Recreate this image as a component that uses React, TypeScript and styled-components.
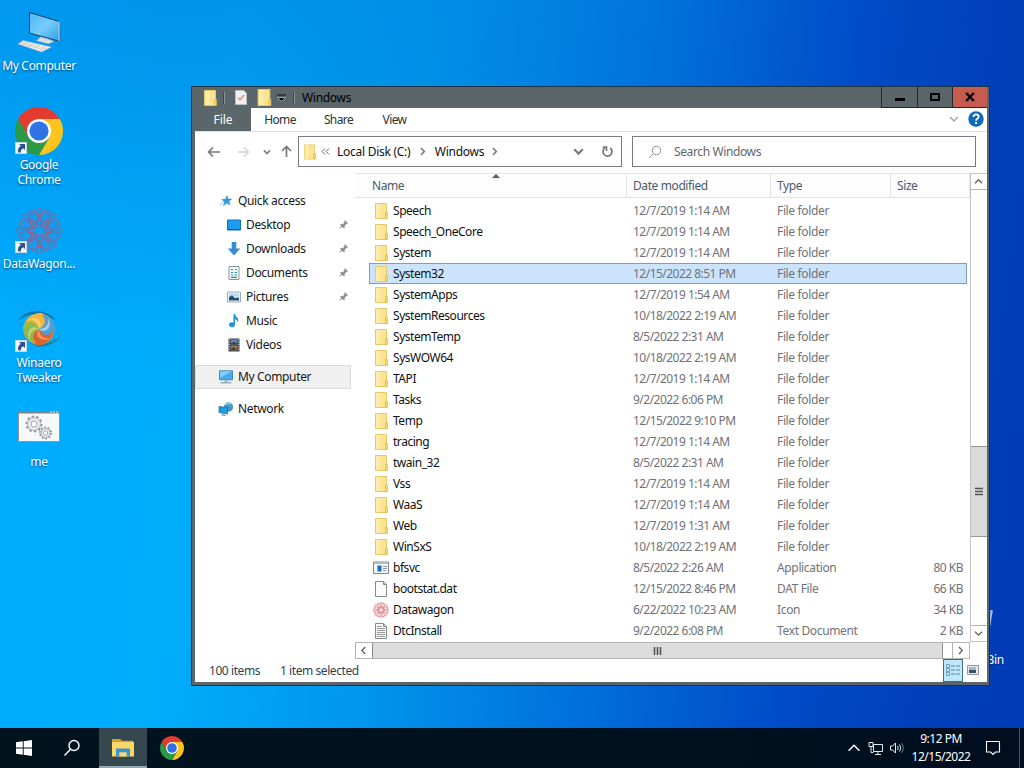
import React from 'react';
import styled, { createGlobalStyle } from 'styled-components';

const GlobalStyle = createGlobalStyle`
  * { box-sizing: border-box; }
  body {
    margin: 0;
    overflow: hidden;
    font-family: 'Noto Sans', 'Open Sans', sans-serif;
    font-size: 12px;
    letter-spacing: -0.35px;
    color: #111;
  }
  svg { display: block; flex: none; }
`;

const Screen = styled.div`
  width: 1024px;
  height: 768px;
  display: flex;
  flex-direction: column;
  overflow: hidden;
`;

const Desktop = styled.main`
  position: relative;
  flex: 1;
  min-height: 0;
  background:
    radial-gradient(ellipse 620px 420px at 190px -60px, rgba(0, 120, 215, 0.55), rgba(0, 120, 215, 0) 100%),
    linear-gradient(97deg, #00acff 0%, #00adfb 22%, #0096ee 40%, #006cda 62%, #004bc8 78%, #003fbb 90%, #003cb6 100%);
`;

const IconColumn = styled.div`
  display: flex;
  flex-direction: column;
  width: 78px;
  padding-top: 8px;
`;

const DesktopItem = styled.div`
  height: 99px;
  width: 78px;
  display: flex;
  flex-direction: column;
  align-items: center;
  gap: 2px;
`;

const DesktopGlyph = styled.div`
  height: 48px;
  display: flex;
  align-items: center;
  justify-content: center;
`;

const DesktopLabel = styled.span`
  color: #fff;
  line-height: 15px;
  text-align: center;
  white-space: pre;
  letter-spacing: -0.3px;
  text-shadow: 0 1px 2px rgba(0, 30, 80, 0.7);
`;

const BinSpot = styled.div`
  position: absolute;
  left: 935px;
  top: 602px;
`;

const Window = styled.section`
  position: absolute;
  left: 191px;
  top: 86px;
  width: 799px;
  height: 600px;
  display: flex;
  flex-direction: column;
  padding: 0 2px 3px 3px;
  border: 1px solid #1c3443;
  background: #5b666a;
`;

const TitleBar = styled.header`
  height: 21px;
  flex: none;
  display: flex;
  align-items: center;
  padding-left: 7px;
`;

const TitleDivider = styled.i<{ $l: number; $r: number }>`
  width: 2px;
  height: 12px;
  margin: 0 ${p => p.$r}px 0 ${p => p.$l}px;
  border-left: 1px solid #3d464a;
  border-right: 1px solid #8b9598;
`;

const TitleText = styled.span`
  color: #000;
  flex: 1;
  letter-spacing: -0.3px;
`;

const CaptionButton = styled.button<{ $close?: boolean; $w?: number }>`
  width: ${p => p.$w ?? 35}px;
  height: 21px;
  padding: 0;
  display: flex;
  align-items: center;
  justify-content: center;
  border: solid #22282b;
  border-width: 0 0 1px 1px;
  background: ${p => (p.$close ? '#c65b50' : 'transparent')};
`;

const Client = styled.div`
  flex: 1;
  min-height: 0;
  display: flex;
  flex-direction: column;
  background: #fff;
`;

const Tabs = styled.nav`
  height: 24px;
  flex: none;
  display: flex;
  border-bottom: 1px solid #dfe2e4;
`;

const Tab = styled.span<{ $active?: boolean; $w: number }>`
  width: ${p => p.$w}px;
  line-height: 23px;
  text-align: center;
  color: ${p => (p.$active ? '#fff' : '#2b3238')};
  background: ${p => (p.$active ? '#5b666a' : 'transparent')};
  letter-spacing: ${p => (p.$active ? -0.1 : -0.6)}px;
`;

const TabTools = styled.div`
  margin-left: auto;
  display: flex;
  align-items: center;
  gap: 9px;
  padding: 0 3px 2px 0;
`;

const AddressRow = styled.div`
  height: 41px;
  flex: none;
  display: flex;
  align-items: center;
  padding: 0 11px 2px 12px;
`;

const NavButtons = styled.div`
  width: 91px;
  display: flex;
  align-items: center;
`;

const Box = styled.div<{ $w: number }>`
  width: ${p => p.$w}px;
  height: 31px;
  display: flex;
  align-items: center;
  border: 1px solid #757b80;
`;

const Crumb = styled.span<{ $w: number }>`
  width: ${p => p.$w}px;
  white-space: nowrap;
  color: #111;
  padding-bottom: 1px;
  letter-spacing: -0.27px;
`;

const AddressBox = styled(Box)`
  padding: 0 7px 0 3px;
  margin-right: 10px;
`;

const SearchBox = styled(Box)`
  padding-left: 15px;
  gap: 12px;
  color: #5f6569;
  letter-spacing: -0.38px;
`;

const Body = styled.div`
  flex: 1;
  min-height: 0;
  display: flex;
`;

const Sidebar = styled.aside`
  width: 160px;
  flex: none;
  padding-top: 16px;
`;

const SideItem = styled.div<{ $level?: number; $selected?: boolean; $gap?: boolean }>`
  display: flex;
  align-items: center;
  width: 156px;
  height: 24px;
  margin-top: ${p => (p.$gap ? 8 : 0)}px;
  padding: 0 2px 1px ${p => (p.$level ? 31 : 23)}px;
  color: #161616;
  background: ${p => (p.$selected ? '#f0f0f0' : 'transparent')};
  box-shadow: ${p => (p.$selected ? 'inset 0 0 0 1px #dcdcdc' : 'none')};
  svg:first-child { margin-right: 4px; }
  svg:last-child { margin-left: auto; }
`;

const Main = styled.div`
  flex: 1;
  min-width: 0;
  display: flex;
  flex-direction: column;
`;

const ListArea = styled.div`
  height: 469px;
  display: flex;
`;

const List = styled.div`
  flex: 1;
  min-width: 0;
  overflow: hidden;
`;

const HeaderRow = styled.div`
  height: 25px;
  display: flex;
  background: #fdfdfd;
  border-top: 1px solid #e3e5e7;
  border-bottom: 1px solid #dfe3e6;
  margin-bottom: 2px;
`;

const HeaderCell = styled.div<{ $w: number; $pad?: number }>`
  position: relative;
  width: ${p => p.$w}px;
  padding-left: ${p => p.$pad ?? 6}px;
  line-height: 24px;
  color: #4b5b6b;
  letter-spacing: -0.4px;
  border-right: 1px solid #e3e5e7;
`;

const SortMark = styled.i`
  position: absolute;
  left: 137px;
  top: 0;
  border: 4px solid transparent;
  border-top: 0;
  border-bottom-color: #555b60;
`;

const FileRow = styled.div<{ $selected?: boolean }>`
  display: grid;
  grid-template-columns: 264px 144px 113px 1fr;
  align-items: center;
  height: 21px;
  margin: 0 3px 0 14px;
  padding: 0 4px 0 0;
  color: #6f7276;
  background: ${p => (p.$selected ? '#cce4fb' : 'transparent')};
  box-shadow: ${p => (p.$selected ? 'inset 0 0 0 1px #7e9cc0' : 'none')};
`;

const NameCell = styled.div`
  display: flex;
  align-items: center;
  gap: 4px;
  padding-left: 4px;
  color: #111;
  letter-spacing: -0.46px;
`;

const DateCell = styled.span`
  letter-spacing: -0.52px;
`;

const SizeCell = styled.span`
  text-align: right;
  letter-spacing: -0.5px;
`;

const VScroll = styled.div`
  width: 17px;
  flex: none;
  display: flex;
  flex-direction: column;
  border: 1px solid #c4c4c4;
  border-right: 0;
`;

const HScroll = styled.div`
  height: 17px;
  width: 615px;
  display: flex;
  border: 1px solid #b4b4b4;
`;

const ScrollButton = styled.div`
  width: 16px;
  height: 15px;
  display: flex;
  align-items: center;
  justify-content: center;
  padding-right: 1px;
`;

const VGap = styled.div`
  height: 257px;
  border-top: 1px solid #b4b4b4;
`;

const VThumb = styled.div`
  height: 91px;
  display: flex;
  align-items: center;
  justify-content: center;
  background: #dadada;
  border: solid #969696;
  border-width: 1px 0;
  padding-right: 1px;
`;

const VRest = styled.div`
  flex: 1;
  border-bottom: 1px solid #b4b4b4;
`;

const HThumb = styled.div`
  width: 571px;
  display: flex;
  align-items: center;
  justify-content: center;
  background: #dcdcdc;
  border: solid #8f8f8f;
  border-width: 0 1px;
`;

const HRest = styled.div`
  flex: 1;
  border-right: 1px solid #b4b4b4;
`;

const StatusBar = styled.footer`
  height: 23px;
  flex: none;
  display: flex;
  align-items: center;
  padding-left: 14px;
  color: #2f3f52;
  letter-spacing: -0.43px;
`;

const StatusText = styled.span<{ $w: number }>`
  width: ${p => p.$w}px;
  white-space: nowrap;
`;

const ViewToggle = styled.div<{ $on?: boolean }>`
  width: 20px;
  height: 23px;
  display: flex;
  align-items: center;
  justify-content: center;
  background: ${p => (p.$on ? '#c0e6fa' : 'transparent')};
  border: 1px solid ${p => (p.$on ? '#3b6f8c' : 'transparent')};
  padding-bottom: 2px;
`;

const Taskbar = styled.footer`
  height: 40px;
  flex: none;
  display: flex;
  background: linear-gradient(90deg, #00131d, #00121f 60%, #000e20);
`;

const TaskButton = styled.div<{ $active?: boolean; $w: number; $shift?: number }>`
  width: ${p => p.$w}px;
  height: 40px;
  padding-right: ${p => p.$shift ?? 0}px;
  display: flex;
  align-items: center;
  justify-content: center;
  background: ${p => (p.$active ? '#35474f' : 'transparent')};
  box-shadow: ${p => (p.$active ? 'inset 0 -2px #91a9b5' : 'none')};
`;

const Tray = styled.div`
  margin-left: auto;
  display: flex;
  align-items: center;
  gap: 7px;
`;

const Clock = styled.div`
  width: 60px;
  color: #fff;
  text-align: center;
  line-height: 18px;
  letter-spacing: -0.5px;
`;

const ShowDesktop = styled.div`
  width: 5px;
  height: 40px;
  border-left: 1px solid #4a5562;
`;

/* ---------- drawings ---------- */

const Chevron = ({ d, w = 9, color = '#5d6266', sw = 1.3, box = '0 0 9 9' }: { d: string; w?: number; color?: string; sw?: number; box?: string }) => (
  <svg width={w} height={w} viewBox={box} fill="none" stroke={color} strokeWidth={sw}><path d={d} /></svg>
);
const DOWN = 'M1 2.7 4.5 6.2 8 2.7';
const UP = 'M1 6.2 4.5 2.7 8 6.2';
const RIGHT = 'M3 1 6.3 4.5 3 8';
const LEFT = 'M6.3 1 2.8 4.5 6.3 8';

const Folder = ({ w = 16, h = 16 }: { w?: number; h?: number }) => (
  <svg width={w} height={h} viewBox="0 0 16 16">
    <path d="M2.500.500h11v15h-11z" fill="#fbe48f" stroke="#e6c968" />
    <path d="M3 1h4.500v14H3z" fill="#fdeba9" />
    <path d="M12.500 9.500h2v6h-2z" fill="#f6d769" stroke="#dcb850" strokeWidth=".7" />
  </svg>
);

const CheckedPage = () => (
  <svg width="12" height="15" viewBox="0 0 12 15">
    <path d="M.5.5h8.200l2.800 2.700v11.300H.5z" fill="#f1f0f1" stroke="#b9bec2" />
    <path d="m3 7.500 2 2.300L9.300 5" fill="none" stroke="#d89a8c" strokeWidth="1.600" />
  </svg>
);

const Chrome = ({ size }: { size: number }) => (
  <svg width={size} height={size} viewBox="0 0 48 48">
    <path d="M3.220 12A24 24 0 0 1 44.780 12H24L13.600 30z" fill="#e33b2e" />
    <path d="M44.780 12A24 24 0 0 1 24 48l10.400-18L24 12z" fill="#fcc41c" />
    <path d="M24 48A24 24 0 0 1 3.220 12L13.600 30l20.800 0z" fill="#2b9a47" />
    <circle cx="24" cy="24" r="12" fill="#fff" />
    <circle cx="24" cy="24" r="9.600" fill="#2d73e6" />
  </svg>
);

const ShortcutMark = styled.div`
  position: absolute;
  left: 0;
  bottom: 1px;
  width: 12px;
  height: 12px;
  background: #f3f6fa;
  border: 1px solid #c5d4e4;
`;

const WithShortcut = styled.div`
  position: relative;
  width: 48px;
  height: 48px;
  display: flex;
  align-items: center;
  justify-content: center;
`;

const Shortcut = ({ children }: { children: React.ReactNode }) => (
  <WithShortcut>
    {children}
    <ShortcutMark>
      <svg width="10" height="10" viewBox="0 0 10 10"><path d="M3 1h6v6L7.200 5.200Q4.500 6.500 4.700 9.500H2.300Q1 5.500 4.800 2.800z" fill="#2b5192" /></svg>
    </ShortcutMark>
  </WithShortcut>
);

const Computer = () => (
  <svg width="44" height="44" viewBox="0 0 44 44">
    <defs>
      <linearGradient id="scr" x1="0" y1="0" x2="1" y2="1"><stop offset="0" stopColor="#4fb5f2" /><stop offset=".5" stopColor="#75cdfb" /><stop offset="1" stopColor="#2e9de8" /></linearGradient>
    </defs>
    <path d="M12.500 2.500 42.700 11.700V31.300L12.500 23z" fill="url(#scr)" stroke="#26435c" strokeWidth="1" />
    <path d="M42.700 11.700v19.600l-1.300.3V11.300z" fill="#b7c4ce" />
    <path d="m23.500 27 7 1.800 6.500 2.800-5.500 2.200-12-3z" fill="#d9dee9" stroke="#a2afc0" strokeWidth=".5" />
    <path d="M6 30.500 34.500 37l-10 5L1 34z" fill="#f1f1ef" stroke="#a8aeb2" strokeWidth=".6" />
    <path d="m5 32.300 25 6.600M3.500 33.300l24 6.900M11 31.700l-6 3.500M17 33l-6 4M23 34.500l-6 4M29 36l-6 4.500" stroke="#c0c0be" strokeWidth=".6" />
  </svg>
);

const Rosette = ({ size, color, core, sw }: { size: number; color: string; core: string; sw: number }) => (
  <svg width={size} height={size} viewBox="-24 -24 48 48" fill="none" strokeWidth={sw}>
    {Array.from({ length: 8 }, (_, i) => (
      <g key={i} transform={`rotate(${i * 45 + 22.5})`}>
        <path d="M-6-21H6L2-14 7-8 0-4-7-8-2-14z" stroke={color} />
        <path d="M-9-16-3-12 0-6 3-12 9-16" stroke={core} />
        <path d="M-9-22-4-18 0-22 4-18 9-22M0-22V-16M-5-9H5" stroke={color} />
      </g>
    ))}
  </svg>
);

const petals = ['#f3b53a', '#4d9fd8', '#e2602b', '#93bb4b'];
const Swirl = () => (
  <svg width="48" height="42" viewBox="-24 -21 48 42">
    <path d="M-22-7Q-14-19 0-18 12-16 17-8 8-15-3-15-14-15-22-7z" fill="#1273a6" />
    <path d="M22 7Q13 18 0 18L-12 13Q-4 16 5 14.500 14 13 22 7z" fill="#1f83a0" />
    <circle r="15.500" fill="#f1a83a" />
    {petals.map((fill, i) => (
      <path key={fill} d="M0 0C-3-7-10-8-14.500-2A16 16 0 0 1 3-16C10-12 8-3 0 0z" fill={fill} transform={`rotate(${i * 90})`} />
    ))}
    {['#fad275', '#a9cdec', '#f0955a', '#bfd37c'].map((fill, i) => (
      <path key={fill} d="M0 0C-2-6-8-8-13-5-9-11 3-10 0 0z" fill={fill} transform={`rotate(${i * 90 + 20})`} />
    ))}
  </svg>
);

const Gear = ({ x, y, r }: { x: number; y: number; r: number }) => (
  <g>
    <circle cx={x} cy={y} r={r} fill="#dfe3e7" stroke="#8c949c" strokeWidth="2" strokeDasharray={`${r * 0.32} ${r * 0.303}`} />
    <circle cx={x} cy={y} r={r - 1} fill="#e6e9ec" stroke="#9ba3aa" strokeWidth=".6" />
    <circle cx={x} cy={y} r={r * 0.4} fill="#fff" stroke="#9ba3aa" strokeWidth=".9" />
  </g>
);

const Batch = () => (
  <svg width="42" height="34" viewBox="0 0 42 34">
    <path d="M.5.500h41v30H.500z" fill="#f8f8f8" stroke="#8d979e" />
    <path d="M0 0h42v2.500H0z" fill="#7d8589" />
    <path d="M32 1h8" stroke="#e5e9ec" strokeDasharray="2 1" />
    <Gear x={16} y={13} r={7.500} />
    <Gear x={27.500} y={22} r={5.500} />
  </svg>
);

const Bin = () => (
  <svg width="42" height="46" viewBox="0 0 42 46"><path d="M2 8h37l-6 36H8z" fill="#a9c7ea" opacity=".7" stroke="#e9f2fb" strokeWidth="1.500" /></svg>
);

const StarIcon = () => (
  <svg width="16" height="14" viewBox="0 0 16 14"><path d="m9 1 1.400 3.700 4.100.1-3.300 2.500 1.200 4.200-3.500-2.300L5 12.300l1.400-4.500L3 5.300l4.300-.3z" fill="#2f9bdc" /><path d="m2 11 4-3.500" stroke="#7cc4ee" /></svg>
);
const DesktopIcon = () => (
  <svg width="16" height="14" viewBox="0 0 16 14"><path d="M1.500 2h13v10h-13z" fill="#1e9bf0" stroke="#1272b8" /><path d="M1.500 11.500h13" stroke="#0f5f9c" /></svg>
);
const DownloadIcon = () => (
  <svg width="16" height="14" viewBox="0 0 16 14"><path d="M5.700 0h4.600v6.500h4L8 13.500 1.700 6.500h4z" fill="#3b8bd3" /></svg>
);
const DocumentIcon = () => (
  <svg width="16" height="14" viewBox="0 0 16 14"><path d="M3 .5h10v13H3z" fill="#f2fafa" stroke="#87979c" /><path d="M5 3.500h2M9 3.500h2M5 6.500h2M8.500 6.500H11M5 9h2M8.500 9H11M5 11.300h6" stroke="#338fa8" strokeWidth="1.200" /></svg>
);
const PicturesIcon = () => (
  <svg width="16" height="14" viewBox="0 0 16 14"><path d="M1.500 2h13v10h-13z" fill="#eef3f8" stroke="#a2acb5" /><path d="M3 3.500h10v3H3z" fill="#b6d7f0" /><path d="M3 10.500V7l3-1.500L9 8l4-.5v3z" fill="#294c75" /></svg>
);
const MusicIcon = () => (
  <svg width="16" height="14" viewBox="0 0 16 14"><path d="M7.500 0h1.500q.4 2.600 2.600 4 1.700 2 .2 4.600-.2-2.800-2.800-3.300v5.500a3 2.600 0 1 1-1.500-2.300z" fill="#2394e0" /></svg>
);
const VideoIcon = () => (
  <svg width="16" height="14" viewBox="0 0 16 14"><path d="M2.500.5h11v13h-11z" fill="#403f49" /><path d="M5 1.500h6v5H5z" fill="#5d8ec0" /><path d="M5 7.500h6v5H5z" fill="#9c7b4c" /><path d="M5 5.500 8 3.500l3 2v1H5zM5 11l3-2 3 3H5z" fill="#2b4b3b" /><path d="M3.700 1v12M12.300 1v12" stroke="#d8d8de" strokeDasharray="1.200 1.200" /></svg>
);
const MonitorIcon = () => (
  <svg width="16" height="14" viewBox="0 0 16 14"><path d="M1.500.8h13v9h-13z" fill="#42acec" stroke="#4b86b2" /><path d="M2 1.300h12L2 8z" fill="#82cdf7" /><path d="M6.500 10.300h3v1.700h-3z" fill="#9cb4c5" /><path d="M2.500 12.800h11" stroke="#819fb5" strokeWidth="1.200" /></svg>
);
const NetworkIcon = () => (
  <svg width="16" height="14" viewBox="0 0 16 14"><circle cx="10.500" cy="5" r="4.700" fill="#4597c9" /><path d="M7 3q3-3 6-1" stroke="#b5dff5" fill="none" /><path d="m1 4.500 8.500 1V12L1 10.500z" fill="#2699e3" stroke="#266998" strokeWidth=".7" /><path d="m3.500 12.700 4 .8" stroke="#6b8da5" strokeWidth="1.200" /></svg>
);
const Pin = () => (
  <svg width="11" height="11" viewBox="0 0 11 11"><path d="m6.500.8 3.700 3.600-1.300.3-2.200 2 .1 2.200-1 .5L2.200 5.800l.7-.9 2.200.1 1.500-2.500zM3.300 6.500 4.500 7.700.8 10.300z" fill="#8d9398" /></svg>
);

const ExeIcon = () => (
  <svg width="16" height="14" viewBox="0 0 16 14"><path d="M.5 1h15v11.500H.5z" fill="#f7f9fa" stroke="#7b8790" /><path d="M1 1.500h14V3H1z" fill="#aebac3" /><path d="M4.500 4.500h4v6h-4z" fill="#176bb0" /><path d="M10 5.500h4M10 7.500h4M10 9.500h3" stroke="#8a959d" /></svg>
);
const PageIcon = ({ lines }: { lines?: boolean }) => (
  <svg width="16" height="16" viewBox="0 0 16 16"><path d="M2.500.5h8l3 3v12h-11z" fill="#fdfdfd" stroke="#868a8c" /><path d="M10.500.5v3h3" fill="none" stroke="#868a8c" />{lines && <path d="M4 3.500h5M4 5.500h8M4 7.500h8M4 9.500h8M4 11.500h8M4 13.500h8" stroke="#999" />}</svg>
);

type FileKind = 'folder' | 'exe' | 'page' | 'icon' | 'text';
const fileGlyph: Record<FileKind, React.ReactNode> = {
  folder: <Folder />,
  exe: <ExeIcon />,
  page: <PageIcon />,
  icon: <Rosette size={16} color="#d66b70" core="#dd8c8f" sw={1.1} />,
  text: <PageIcon lines />,
};

/* ---------- data ---------- */

const files: [string, string, string?, string?, FileKind?][] = [
  ['Speech', '12/7/2019 1:14 AM'],
  ['Speech_OneCore', '12/7/2019 1:14 AM'],
  ['System', '12/7/2019 1:14 AM'],
  ['System32', '12/15/2022 8:51 PM'],
  ['SystemApps', '12/7/2019 1:54 AM'],
  ['SystemResources', '10/18/2022 2:19 AM'],
  ['SystemTemp', '8/5/2022 2:31 AM'],
  ['SysWOW64', '10/18/2022 2:19 AM'],
  ['TAPI', '12/7/2019 1:14 AM'],
  ['Tasks', '9/2/2022 6:06 PM'],
  ['Temp', '12/15/2022 9:10 PM'],
  ['tracing', '12/7/2019 1:14 AM'],
  ['twain_32', '8/5/2022 2:31 AM'],
  ['Vss', '12/7/2019 1:14 AM'],
  ['WaaS', '12/7/2019 1:14 AM'],
  ['Web', '12/7/2019 1:31 AM'],
  ['WinSxS', '10/18/2022 2:19 AM'],
  ['bfsvc', '8/5/2022 2:26 AM', 'Application', '80 KB', 'exe'],
  ['bootstat.dat', '12/15/2022 8:46 PM', 'DAT File', '66 KB', 'page'],
  ['Datawagon', '6/22/2022 10:23 AM', 'Icon', '34 KB', 'icon'],
  ['DtcInstall', '9/2/2022 6:08 PM', 'Text Document', '2 KB', 'text'],
];

const places: [string, React.ReactNode, boolean][] = [
  ['Desktop', <DesktopIcon />, true],
  ['Downloads', <DownloadIcon />, true],
  ['Documents', <DocumentIcon />, true],
  ['Pictures', <PicturesIcon />, true],
  ['Music', <MusicIcon />, false],
  ['Videos', <VideoIcon />, false],
];

const desktopItems: [string, React.ReactNode][] = [
  ['My Computer', <Computer />],
  ['Google\nChrome', <Shortcut><Chrome size={48} /></Shortcut>],
  ['DataWagon...', <Shortcut><Rosette size={47} color="#7a6da6" core="#a8527c" sw={0.9} /></Shortcut>],
  ['Winaero\nTweaker', <Shortcut><Swirl /></Shortcut>],
  ['me', <Batch />],
];

/* ---------- explorer window ---------- */

const Explorer = () => (
  <Window>
    <TitleBar>
      <Folder />
      <TitleDivider $l={5} $r={10} />
      <CheckedPage />
      <svg width="8" height="1" />
      <Folder w={18} h={17} />
      <svg width="17" height="11" viewBox="0 0 17 11"><path d="M4 3h9" stroke="#111" /><path d="M4.500 5.500h8l-4 4z" fill="#111" stroke="#dfe3e5" strokeWidth=".6" /></svg>
      <TitleDivider $l={3} $r={7} />
      <TitleText>Windows</TitleText>
      <CaptionButton $w={36}><svg width="12" height="12" viewBox="0 0 12 12"><path d="M1 8.500h10" stroke="#000" strokeWidth="3" /></svg></CaptionButton>
      <CaptionButton><svg width="12" height="12" viewBox="0 0 12 12"><path d="M2 3h8v6H2z" fill="none" stroke="#000" strokeWidth="2" /></svg></CaptionButton>
      <CaptionButton $close><svg width="12" height="12" viewBox="0 0 12 12"><path d="m2.500 2.500 7 7M9.500 2.500l-7 7" stroke="#000" strokeWidth="2.300" /><path d="M1.500 2.300h3M7.500 2.300h3M1.500 9.700h3M7.500 9.700h3" stroke="#000" /></svg></CaptionButton>
    </TitleBar>
    <Client>
      <Tabs>
        <Tab $active $w={56}>File</Tab>
        <Tab $w={58}>Home</Tab>
        <Tab $w={59}>Share</Tab>
        <Tab $w={53}>View</Tab>
        <TabTools>
          <Chevron d={DOWN} w={10} color="#a2a6a9" />
          <svg width="16" height="16" viewBox="0 0 16 16"><circle cx="8" cy="8" r="7.700" fill="#0e69bb" /><path d="M5.500 6q0-2.600 2.600-2.600T10.600 5.700q0 1.300-1.400 2Q8 8.300 8 9.700" fill="none" stroke="#fff" strokeWidth="1.800" /><path d="M7 11h2v2H7z" fill="#fff" /></svg>
        </TabTools>
      </Tabs>
      <AddressRow>
        <NavButtons>
          <svg width="14" height="12" viewBox="0 0 14 12" fill="none" stroke="#73787c" strokeWidth="1.700"><path d="M6 1.500 1.500 6 6 10.500M1.500 6H13" /></svg>
          <svg width="15" height="1" />
          <svg width="14" height="12" viewBox="0 0 14 12" fill="none" stroke="#cfd2d4" strokeWidth="1.300"><path d="M8 1.500 12.500 6 8 10.500M12.500 6H1.500" /></svg>
          <svg width="13" height="1" />
          <Chevron d={DOWN} w={8} color="#7b8084" sw={2} />
          <svg width="9" height="1" />
          <svg width="13" height="13" viewBox="0 0 13 13" fill="none" stroke="#73787c" strokeWidth="1.700"><path d="M2 6 6.500 1.500 11 6M6.500 1.500V12" /></svg>
        </NavButtons>
        <AddressBox $w={324}>
          <Folder w={15} h={16} />
          <svg width="20" height="9" viewBox="0 0 20 9" fill="none" stroke="#5d6266"><path d="M8 1.500 5 4.500 8 7.500M12 1.500 9 4.500 12 7.500" /></svg>
          <Crumb $w={82}>Local Disk (C:)</Crumb>
          <Chevron d={RIGHT} w={9} color="#767b7f" sw={1.600} />
          <svg width="8" height="1" />
          <Crumb $w={56}>Windows</Crumb>
          <Chevron d={RIGHT} w={9} color="#767b7f" sw={1.600} />
          <svg width="74" height="1" />
          <Chevron d={DOWN} w={11} color="#767b7f" sw={1.800} />
          <svg width="17" height="1" />
          <svg width="13" height="13" viewBox="0 0 13 13" fill="none" stroke="#73787c" strokeWidth="1.700"><path d="M9.200 3A4.500 4.500 0 1 1 4 2.900M5.500 6V2H1.500" /></svg>
        </AddressBox>
        <SearchBox $w={344}>
          <svg width="14" height="14" viewBox="0 0 14 14" fill="none" stroke="#8a8f93"><circle cx="8.500" cy="5.500" r="4.200" /><path d="M5.500 8.500.8 13.200" /></svg>
          Search Windows
        </SearchBox>
      </AddressRow>
      <Body>
        <Sidebar>
          <SideItem><StarIcon /><span>Quick access</span></SideItem>
          {places.map(([label, icon, pinned]) => (
            <SideItem key={label} $level={1}>{icon}<span>{label}</span>{pinned && <Pin />}</SideItem>
          ))}
          <SideItem $selected $gap><MonitorIcon /><span>My Computer</span></SideItem>
          <SideItem $gap><NetworkIcon /><span>Network</span></SideItem>
        </Sidebar>
        <Main>
          <ListArea>
            <List>
              <HeaderRow>
                <HeaderCell $w={272} $pad={17}>Name<SortMark /></HeaderCell>
                <HeaderCell $w={144}>Date modified</HeaderCell>
                <HeaderCell $w={120}>Type</HeaderCell>
                <HeaderCell $w={79}>Size</HeaderCell>
              </HeaderRow>
              {files.map(([name, date, type = 'File folder', size = '', kind = 'folder']) => (
                <FileRow key={name} $selected={name === 'System32'}>
                  <NameCell>{fileGlyph[kind]}{name}</NameCell>
                  <DateCell>{date}</DateCell>
                  <span>{type}</span>
                  <SizeCell>{size}</SizeCell>
                </FileRow>
              ))}
            </List>
            <VScroll>
              <ScrollButton><Chevron d={UP} /></ScrollButton>
              <VGap />
              <VThumb><svg width="8" height="9" viewBox="0 0 8 9"><path d="M0 1.500h8M0 4.500h8M0 7.500h8" stroke="#50565a" strokeWidth="1.600" /></svg></VThumb>
              <VRest />
              <ScrollButton><Chevron d={DOWN} /></ScrollButton>
            </VScroll>
          </ListArea>
          <HScroll>
            <ScrollButton><Chevron d={LEFT} /></ScrollButton>
            <HThumb><svg width="9" height="8" viewBox="0 0 9 8"><path d="M1.500 0v8M4.500 0v8M7.500 0v8" stroke="#50565a" strokeWidth="1.600" /></svg></HThumb>
            <HRest />
            <ScrollButton><Chevron d={RIGHT} /></ScrollButton>
          </HScroll>
        </Main>
      </Body>
      <StatusBar>
        <StatusText $w={71}>100 items</StatusText>
        <StatusText $w={663}>1 item selected</StatusText>
        <ViewToggle $on><svg width="14" height="12" viewBox="0 0 14 12" fill="none" stroke="#56859e"><path d="M.5.5h3v3h-3zM.5 4.500h3v3h-3zM.5 8.500h3v3h-3z" strokeWidth=".7" /><path d="M5 2h4M10 2h4M5 6h4M10 6h4M5 10h4M10 10h4" /></svg></ViewToggle>
        <ViewToggle><svg width="12" height="10" viewBox="0 0 12 10"><path d="M.5.500h11v9H.500z" fill="#e6eaec" stroke="#939a9f" /><path d="M2 2h7v3H2z" fill="#9fbccd" /><path d="M2 5h7v3H2z" fill="#3c5260" /></svg></ViewToggle>
      </StatusBar>
    </Client>
  </Window>
);

export default function App() {
  return (
    <Screen>
      <GlobalStyle />
      <Desktop>
        <IconColumn>
          {desktopItems.map(([label, icon]) => (
            <DesktopItem key={label}>
              <DesktopGlyph>{icon}</DesktopGlyph>
              <DesktopLabel>{label}</DesktopLabel>
            </DesktopItem>
          ))}
        </IconColumn>
        <BinSpot>
          <DesktopItem>
            <DesktopGlyph><Bin /></DesktopGlyph>
            <DesktopLabel>Recycle Bin</DesktopLabel>
          </DesktopItem>
        </BinSpot>
        <Explorer />
      </Desktop>
      <Taskbar>
        <TaskButton $w={48}><svg width="16" height="16" viewBox="0 0 16 16" fill="#fff"><path d="M0 2.300 6.800 1.300v6.300H0zM7.700 1.200 16 0v7.600H7.700zM0 8.400h6.800v6.300L0 13.700zM7.700 8.400H16V16l-8.300-1.200z" /></svg></TaskButton>
        <TaskButton $w={51} $shift={3}><svg width="18" height="18" viewBox="0 0 18 18" fill="none" stroke="#fff" strokeWidth="1.400"><circle cx="11" cy="6.500" r="5" /><path d="M7.500 10.200 1.500 16.500" /></svg></TaskButton>
        <TaskButton $w={48} $active>
          <svg width="22" height="18" viewBox="0 0 22 18"><path d="M0 0h8l2 1.800h11V6H0z" fill="#d99e2f" /><path d="M0 3h22v14.500H0z" fill="#fbd766" /><path d="M4 9.500h14V17.500h-3.500v-4h-7v4H4z" fill="#3a94cf" /><path d="M7.500 13.500h7v4h-7z" fill="#f6d67b" /></svg>
        </TaskButton>
        <TaskButton $w={50}><Chrome size={24} /></TaskButton>
        <Tray>
          <Chevron d={UP} w={14} color="#fff" sw={0.9} />
          <svg width="15" height="13" viewBox="0 0 15 13" fill="none" stroke="#e6eaee"><path d="M5.500 2.500h9v7h-9zM10 9.500v2.500M7 12.500h6M1 .5h4v4H1zM3 4.500v6h2.500" /></svg>
          <svg width="14" height="14" viewBox="0 0 14 14" fill="none" stroke="#e6eaee"><path d="M.5 5h2l3-3v10l-3-3h-2z" /><path d="M7.500 5q1.300 2 0 4M9.500 3.500q2.500 3.500 0 7" /><path d="M11.500 2q3.500 5 0 10" opacity=".5" /></svg>
          <Clock>9:12 PM<br />12/15/2022</Clock>
          <svg width="34" height="17" viewBox="0 0 34 17" fill="none" stroke="#fff"><path d="M8.500 1.500h13v10.500h-4l-2.500 2.500-2.500-2.500h-4z" strokeWidth="1.100" /></svg>
          <ShowDesktop />
        </Tray>
      </Taskbar>
    </Screen>
  );
}
